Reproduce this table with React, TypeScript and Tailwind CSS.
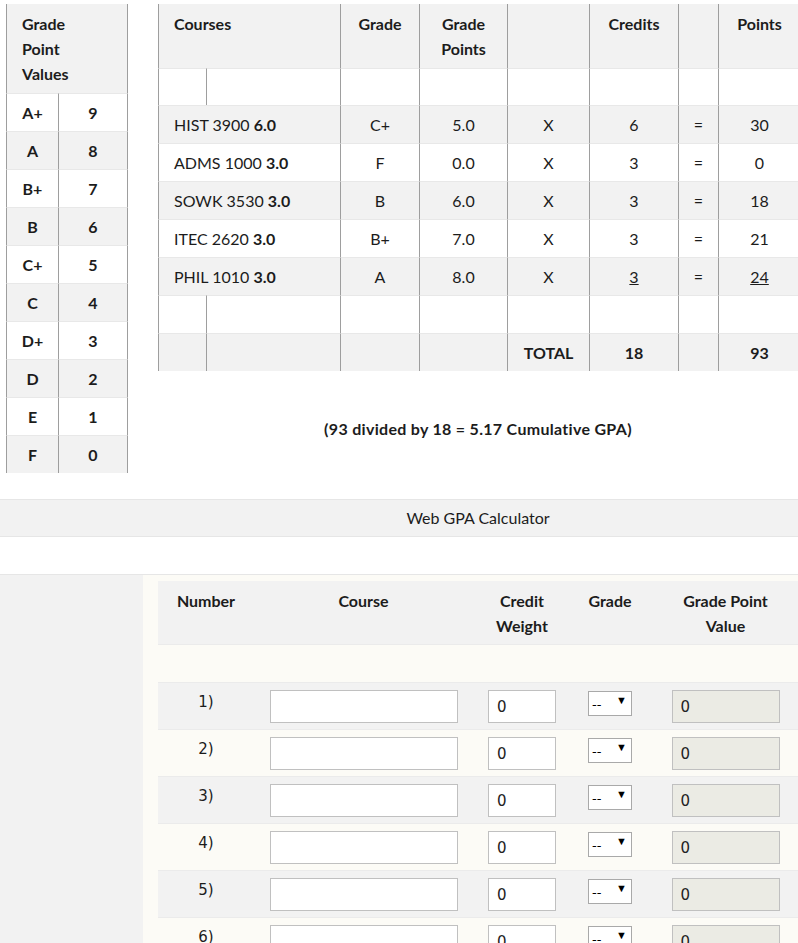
import React from 'react';

const sans = "font-['Lato','Noto_Sans',sans-serif]";
const verdana = "font-['DejaVu_Sans','Verdana',sans-serif]";

const gradeValues = [
  ['A+', '9'],
  ['A', '8'],
  ['B+', '7'],
  ['B', '6'],
  ['C+', '5'],
  ['C', '4'],
  ['D+', '3'],
  ['D', '2'],
  ['E', '1'],
  ['F', '0'],
];

const courses = [
  { code: 'HIST 3900', weight: '6.0', grade: 'C+', gp: '5.0', credits: '6', points: '30' },
  { code: 'ADMS 1000', weight: '3.0', grade: 'F', gp: '0.0', credits: '3', points: '0' },
  { code: 'SOWK 3530', weight: '3.0', grade: 'B', gp: '6.0', credits: '3', points: '18' },
  { code: 'ITEC 2620', weight: '3.0', grade: 'B+', gp: '7.0', credits: '3', points: '21' },
  { code: 'PHIL 1010', weight: '3.0', grade: 'A', gp: '8.0', credits: '3', points: '24', last: true },
];

// vertical rule between cells
const vl = 'border-l border-[#9e9e9e]';

function GradeTable() {
  return (
    <table className="w-[122px] table-fixed border-separate border-spacing-0 text-[16px] leading-[25px]">
      <colgroup>
        <col className="w-[52px]" />
        <col className="w-[70px]" />
      </colgroup>
      <thead>
        <tr className="bg-[#f2f2f2]">
          <th colSpan={2} className={`${vl} border-r h-[89px] px-[15px] text-left align-middle font-bold`}>
            Grade<br />Point<br />Values
          </th>
        </tr>
      </thead>
      <tbody>
        {gradeValues.map(([g, v], i) => (
          <tr key={g} className={i % 2 ? 'bg-[#f2f2f2]' : 'bg-white'}>
            <td className={`${vl} border-t border-t-[#e8e8e8] h-[38px] text-center font-bold`}>{g}</td>
            <td className={`${vl} border-r border-r-[#9e9e9e] border-t border-t-[#e8e8e8] h-[38px] text-center font-bold`}>{v}</td>
          </tr>
        ))}
      </tbody>
    </table>
  );
}

function CoursesTable() {
  const cell = `${vl} border-t border-t-[#e8e8e8] text-center`;
  const blank = (h: string, bold = false, total = false) => (
    <tr className={`${bold ? 'bg-[#f2f2f2] font-bold' : 'bg-white'}`}>
      <td className={`${cell} ${h}`}></td>
      <td className={cell}></td>
      <td className={cell}></td>
      <td className={cell}></td>
      <td className={cell}>{total ? 'TOTAL' : ''}</td>
      <td className={cell}>{total ? '18' : ''}</td>
      <td className={cell}></td>
      <td className={cell}>{total ? '93' : ''}</td>
    </tr>
  );
  return (
    <table className="w-[642px] table-fixed border-separate border-spacing-0 text-[16px] leading-[25px]">
      <colgroup>
        <col className="w-[48px]" />
        <col className="w-[134px]" />
        <col className="w-[79px]" />
        <col className="w-[88px]" />
        <col className="w-[82px]" />
        <col className="w-[89px]" />
        <col className="w-[40px]" />
        <col className="w-[82px]" />
      </colgroup>
      <thead>
        <tr className="h-[64px] bg-[#f2f2f2] align-top font-bold">
          <th colSpan={2} className={`${vl} pl-[15px] pt-[7px] text-left`}>Courses</th>
          <th className={`${vl} pt-[7px]`}>Grade</th>
          <th className={`${vl} pt-[7px]`}>Grade<br />Points</th>
          <th className={vl}></th>
          <th className={`${vl} pt-[7px]`}>Credits</th>
          <th className={vl}></th>
          <th className={`${vl} pt-[7px]`}>Points</th>
        </tr>
      </thead>
      <tbody>
        {blank('h-[37px]')}
        {courses.map((c, i) => (
          <tr key={c.code} className={i % 2 ? 'bg-white' : 'bg-[#f2f2f2]'}>
            <td colSpan={2} className={`${vl} border-t border-t-[#e8e8e8] h-[38px] pl-[15px] text-left`}>
              {c.code} <b>{c.weight}</b>
            </td>
            <td className={cell}>{c.grade}</td>
            <td className={cell}>{c.gp}</td>
            <td className={cell}>X</td>
            <td className={cell}>{c.last ? <u>{c.credits}</u> : c.credits}</td>
            <td className={cell}>=</td>
            <td className={cell}>{c.last ? <u>{c.points}</u> : c.points}</td>
          </tr>
        ))}
        {blank('h-[38px]')}
        {blank('h-[38px]', true, true)}
      </tbody>
    </table>
  );
}

function CalcRow({ n, shaded }: { n: number; shaded: boolean }) {
  const box = `h-[33px] border border-[#c0c0c0] px-[8px] ${verdana} text-[15px] text-[#222] outline-none`;
  const td = 'border-t border-[#ebebeb] pt-[7px] align-top text-center';
  return (
    <tr className={shaded ? 'bg-[#f2f2f2]' : ''}>
      <td className={`h-[47px] ${td} ${verdana} text-[15px] leading-[25px]`}>{n})</td>
      <td className={td}>
        <input className={`${box} w-[188px] bg-white`} defaultValue="" />
      </td>
      <td className={td}>
        <input className={`${box} w-[68px] bg-white`} defaultValue="0" />
      </td>
      <td className={td}>
        <div className="relative mx-auto h-[25px] w-[44px]">
          <select className={`h-[25px] w-[44px] appearance-none border border-[#a9a9a9] bg-white pl-[3px] ${verdana} text-[13px] text-black`} defaultValue="--">
            <option>--</option>
          </select>
          <span className="pointer-events-none absolute right-[5px] top-[4px] text-[11px] leading-[12px] text-black">▼</span>
        </div>
      </td>
      <td className={td}>
        <input className={`${box} w-[108px] bg-[#ebebe4]`} defaultValue="0" readOnly />
      </td>
    </tr>
  );
}

export default function App() {
  return (
    <main className={`h-[943px] w-[798px] overflow-hidden bg-white text-[#1c1c1c] ${sans}`}>
      {/* top: grade values + worked example */}
      <div className="flex items-start pt-[4px] pl-[6px]">
        <GradeTable />
        <div className="ml-[30px] flex flex-col">
          <CoursesTable />
          <p className="mt-[45px] w-[640px] text-center text-[16px] font-bold leading-[25px] tracking-[0.3px]">
            (93 divided by 18 = 5.17 Cumulative GPA)
          </p>
        </div>
      </div>

      {/* calculator band */}
      <div className="mt-[26px] h-[38px] border-y border-[#e6e6e6] bg-[#f2f2f2] pl-[158px] text-center text-[16px] leading-[36px]">
        <span className="inline-block w-[640px]">Web GPA Calculator</span>
      </div>
      <div className="h-[38px] border-b border-[#e6e6e6] bg-white" />

      <div className="flex">
        <aside className="h-[380px] w-[143px] shrink-0 bg-[#f2f2f2]" />
        <section className="flex-1 bg-[#fcfbf6] pt-[6px] pl-[15px]">
          <table className="w-[644px] table-fixed border-separate border-spacing-0 text-[16px] leading-[25px]">
            <colgroup>
              <col className="w-[96px]" />
              <col className="w-[219px]" />
              <col className="w-[98px]" />
              <col className="w-[78px]" />
              <col className="w-[153px]" />
            </colgroup>
            <thead>
              <tr className="h-[63px] bg-[#f2f2f2] align-top font-bold">
                <th className="pt-[7px]">Number</th>
                <th className="pt-[7px]">Course</th>
                <th className="pt-[7px]">Credit<br />Weight</th>
                <th className="pt-[7px]">Grade</th>
                <th className="pt-[7px]">Grade Point<br />Value</th>
              </tr>
            </thead>
            <tbody>
              <tr>
                <td colSpan={5} className="h-[38px] border-t border-[#ebebeb]"></td>
              </tr>
              {[1, 2, 3, 4, 5, 6].map((n) => (
                <CalcRow key={n} n={n} shaded={n % 2 === 1} />
              ))}
            </tbody>
          </table>
        </section>
      </div>
    </main>
  );
}
